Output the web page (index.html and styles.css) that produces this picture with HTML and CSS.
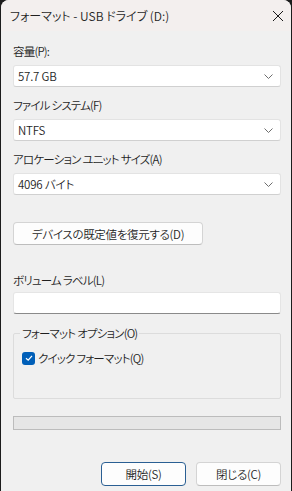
FILE: index.html
```html
<!DOCTYPE html>
<html lang="ja">
<head>
    <meta charset="UTF-8">
    <meta name="viewport" content="width=device-width, initial-scale=1.0">
    <title>フォーマット - USB ドライブ (D:)</title>
    <link rel="stylesheet" href="styles.css">
</head>
<body>
    <div class="window">
        <div class="title-bar">
            <span class="title">フォーマット - USB ドライブ (D:)</span>
            <span class="close">
                <svg width="12" height="12" viewBox="0 0 12 12">
                    <path d="M1 1 L11 11 M11 1 L1 11" stroke="#1a1a1a" stroke-width="1" fill="none"/>
                </svg>
            </span>
        </div>

        <div class="content">
            <p class="label first">容量(P):</p>
            <div class="select">
                <span>57.7 GB</span>
                <svg class="chevron" width="9" height="5" viewBox="0 0 9 5">
                    <path d="M0.5 0.5 L4.5 4.5 L8.5 0.5" stroke="#6d6d6d" fill="none"/>
                </svg>
            </div>

            <p class="label">ファイル システム(F)</p>
            <div class="select">
                <span>NTFS</span>
                <svg class="chevron" width="9" height="5" viewBox="0 0 9 5">
                    <path d="M0.5 0.5 L4.5 4.5 L8.5 0.5" stroke="#6d6d6d" fill="none"/>
                </svg>
            </div>

            <p class="label">アロケーション ユニット サイズ(A)</p>
            <div class="select">
                <span>4096 バイト</span>
                <svg class="chevron" width="9" height="5" viewBox="0 0 9 5">
                    <path d="M0.5 0.5 L4.5 4.5 L8.5 0.5" stroke="#6d6d6d" fill="none"/>
                </svg>
            </div>

            <button class="button restore">デバイスの既定値を復元する(D)</button>

            <p class="label volume">ボリューム ラベル(L)</p>
            <div class="text-input"></div>

            <fieldset class="group">
                <legend>フォーマット オプション(O)</legend>
                <div class="check-row">
                    <span class="checkbox">
                        <svg width="8" height="8" viewBox="0 0 8 8">
                            <path d="M1 4.2 L3.2 6.2 L7 1.8" stroke="white" stroke-width="1.2" fill="none"/>
                        </svg>
                    </span>
                    <span>クイック フォーマット(Q)</span>
                </div>
            </fieldset>

            <div class="progress"></div>

            <div class="actions">
                <button class="button primary">開始(S)</button>
                <button class="button">閉じる(C)</button>
            </div>
        </div>
    </div>
</body>
</html>
```

FILE: styles.css
```css
html, body{
    margin: 0;
    height: 100%;
}
body{
    background-color: #1c1c1c;
    font-family: "Noto Sans CJK JP", "Noto Sans", sans-serif;
    font-size: 12px;
    font-weight: 350;
    font-feature-settings: "palt";
    color: #1f1f1f;
    overflow: hidden;
}

.window{
    margin-left: 1px;
    width: 290px;
    height: 491px;
    background-color: #f0f0f0;
    border-radius: 8px 8px 0 0;
    overflow: hidden;
}

.title-bar{
    height: 31px;
    background-color: #f3efee;
    display: flex;
    align-items: center;
    justify-content: space-between;
    padding: 0 7px 0 9px;
}
.close{
    display: flex;
    width: 12px;
    height: 12px;
}

.content{
    padding: 0 10px 0 12px;
    font-size: 11.5px;
    letter-spacing: -0.8px;
}

.label{
    margin: 10px 0 6px 0;
    height: 16px;
    line-height: 16px;
}
.label.first{
    margin-top: 12px;
}
.label.volume{
    margin-top: 27px;
    margin-bottom: 4px;
}

.select{
    height: 22px;
    box-sizing: border-box;
    background-color: white;
    border: 1px solid #e3e3e3;
    border-bottom-color: #d0d0d0;
    border-radius: 3px;
    display: flex;
    align-items: center;
    justify-content: space-between;
    padding: 0 7px 0 4px;
    letter-spacing: -0.2px;
}
.chevron{
    display: block;
}

.button{
    font-family: inherit;
    font-size: 11.5px;
    font-weight: inherit;
    font-feature-settings: "palt";
    letter-spacing: -0.3px;
    color: #1f1f1f;
    background-color: #fdfdfd;
    border: 1px solid #d4d4d4;
    border-bottom-color: #bdbdbd;
    border-radius: 4px;
    height: 24px;
    padding: 0;
}
.restore{
    display: block;
    width: 190px;
    height: 23px;
    margin-top: 27px;
}

.text-input{
    height: 22px;
    box-sizing: border-box;
    background-color: white;
    border: 1px solid #e5e5e5;
    border-bottom: 1px solid #8a8a8a;
    border-radius: 3px;
}

.group{
    margin: 12px 0 0 0;
    padding: 10px 8px 0 8px;
    height: 73px;
    box-sizing: border-box;
    border: 1px solid #dcdcdc;
    border-radius: 2px;
}
.group legend{
    padding: 0 2px;
    margin-left: -2px;
    line-height: 14px;
}
.check-row{
    display: flex;
    align-items: center;
    gap: 3px;
}
.checkbox{
    width: 13px;
    height: 13px;
    border-radius: 3px;
    background-color: #005fb8;
    display: flex;
    align-items: center;
    justify-content: center;
}

.progress{
    margin-top: 17px;
    height: 14px;
    box-sizing: border-box;
    background-color: #e6e6e6;
    border: 1px solid #bcbcbc;
}

.actions{
    margin-top: 32px;
    display: flex;
    justify-content: flex-end;
    gap: 10px;
}
.actions .button{
    width: 85px;
}
.primary{
    border: 1px solid #2a5f93;
}
```
